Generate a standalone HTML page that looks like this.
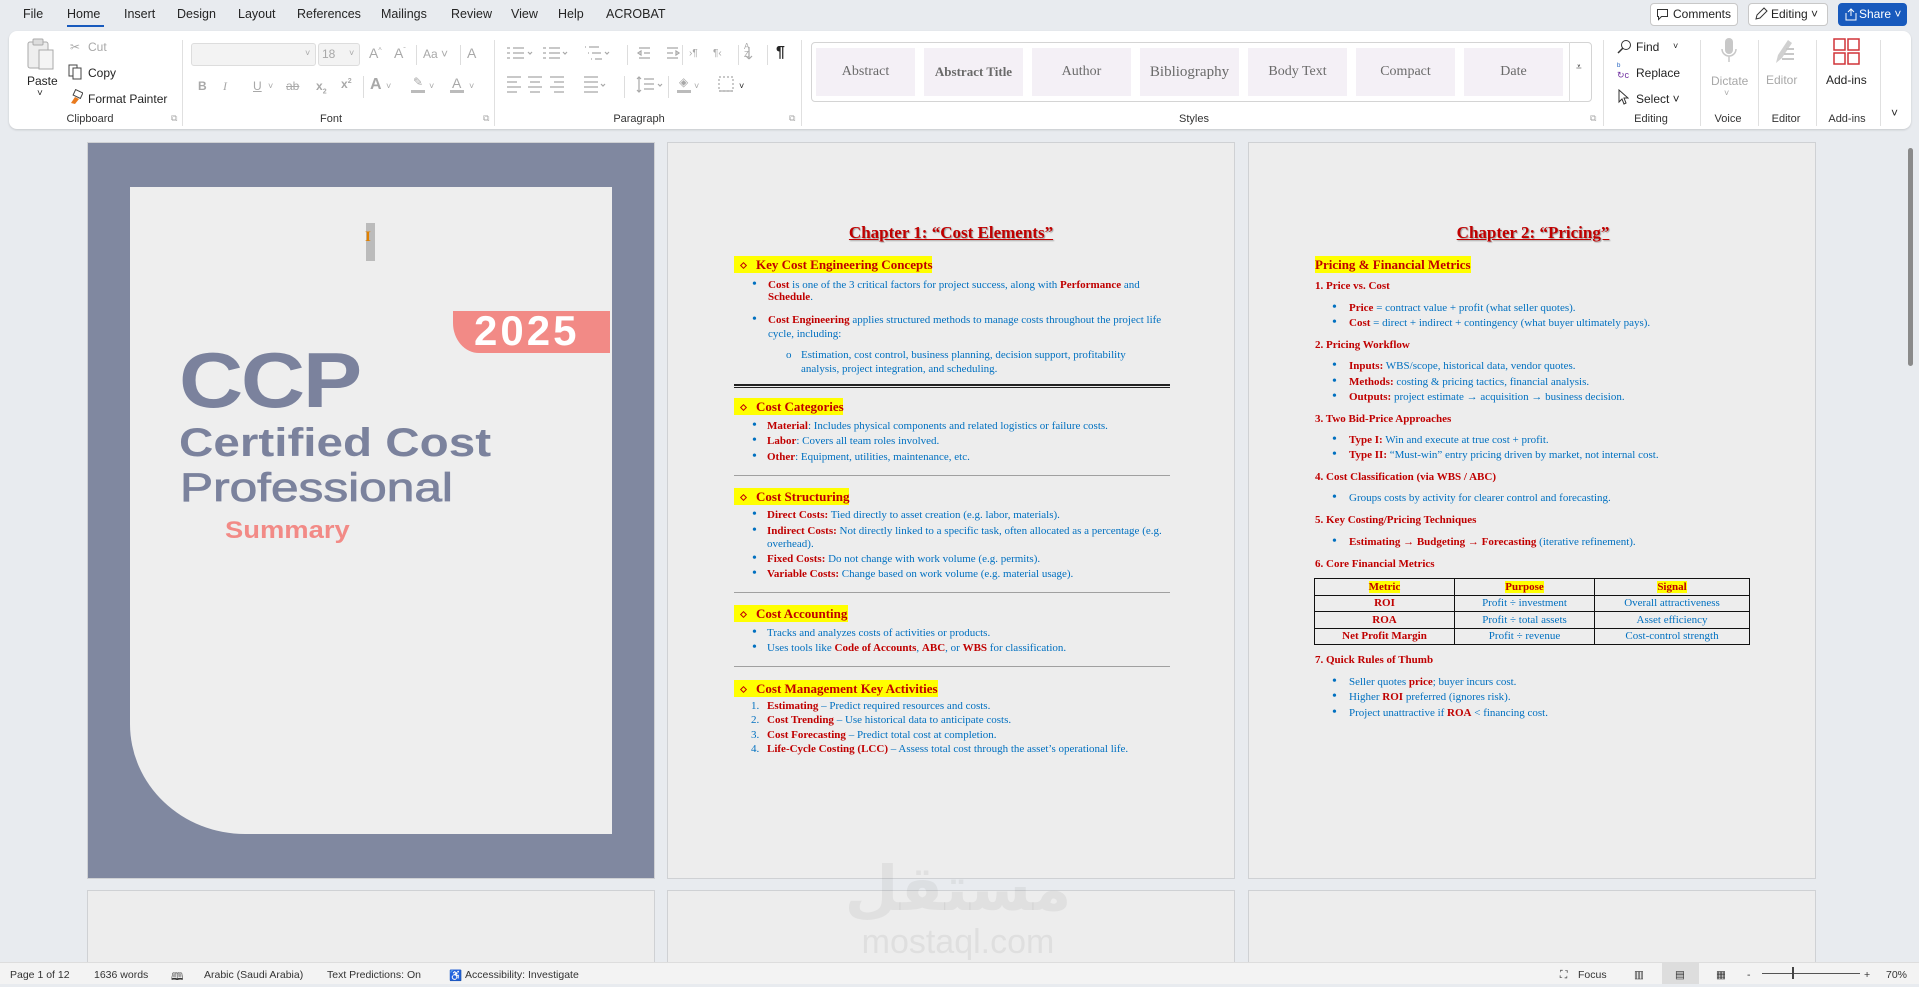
<!DOCTYPE html>
<html><head><meta charset="utf-8">
<style>
*{margin:0;padding:0;box-sizing:border-box}
body{width:1919px;height:984px;overflow:hidden;background:#e8ebef;position:relative;font-family:"Liberation Sans",sans-serif;color:#222}
.a{position:absolute;white-space:nowrap}
.tab{position:absolute;top:7px;font-size:12.5px;color:#242424}
.rib{position:absolute;left:9px;top:31px;width:1902px;height:98px;background:#fff;border-radius:8px;box-shadow:0 1px 2px rgba(0,0,0,.15)}
.sep{position:absolute;top:40px;width:1px;height:86px;background:#e0e0e0}
.gl{position:absolute;top:113px;font-size:11px;color:#333;transform:translateX(-50%)}
.ri{position:absolute;font-size:12px;color:#242424}
.dis{color:#a8a8a8}
.sty{position:absolute;top:48px;width:99px;height:48px;background:#f4f0f6;font-family:"Liberation Serif",serif;font-size:14px;color:#6a6a6a;text-align:center;line-height:48px}
.page{position:absolute;background:#ededed;border:1px solid #cfd1d4}
.l{position:absolute;white-space:nowrap;font:11px/12px "Liberation Serif",serif;color:#0070c0}
.b{font-size:14px}
.r{color:#c00000;font-weight:bold}
.h{position:absolute;background:#ffff00;height:17px;font:bold 13px/17px "Liberation Serif",serif;color:#c00000;white-space:nowrap}
.dm{display:inline-block;width:5px;height:5px;border:1.3px solid #c00000;transform:rotate(45deg);margin:0 10px 1px 7px;vertical-align:middle}
.hr{position:absolute;left:734px;width:436px;height:1px;background:#a0a0a0}
.ch{position:absolute;font:bold 17px "Liberation Serif",serif;color:#c00000;text-decoration:underline;text-shadow:1px 1px 1px rgba(0,0,0,.35);transform:translateX(-50%);white-space:nowrap}
table{position:absolute;left:1314px;top:578px;width:436px;border-collapse:collapse;font:11px "Liberation Serif",serif;color:#0070c0}
td{border:1.5px solid #111;text-align:center;height:16.5px;padding:0}
.st{position:absolute;top:969px;font-size:10.5px;color:#333}
</style></head><body>

<!-- tabs -->
<div class="tab" style="left:23px">File</div>
<div class="tab" style="left:67px">Home</div>
<div class="a" style="left:67px;top:25px;width:37px;height:2px;background:#185abd"></div>
<div class="tab" style="left:124px">Insert</div>
<div class="tab" style="left:177px">Design</div>
<div class="tab" style="left:238px">Layout</div>
<div class="tab" style="left:297px">References</div>
<div class="tab" style="left:381px">Mailings</div>
<div class="tab" style="left:451px">Review</div>
<div class="tab" style="left:511px">View</div>
<div class="tab" style="left:558px">Help</div>
<div class="tab" style="left:606px">ACROBAT</div>

<div class="a" style="left:1650px;top:3px;width:88px;height:23px;border:1px solid #c8c8c8;border-radius:4px;background:#fff;font-size:12px;line-height:21px;padding-left:22px">Comments</div>
<svg class="a" style="left:1656px;top:8px" width="13" height="13"><path d="M1.5 1.5h10v7h-6l-3 3v-3h-1z" fill="none" stroke="#333"/></svg>
<div class="a" style="left:1748px;top:3px;width:80px;height:23px;border:1px solid #c8c8c8;border-radius:4px;background:#fff;font-size:12px;line-height:21px;padding-left:22px">Editing ˅</div>
<svg class="a" style="left:1754px;top:7px" width="14" height="14"><path d="M2 12l1-4 7-7 3 3-7 7z" fill="none" stroke="#333"/></svg>
<div class="a" style="left:1838px;top:3px;width:69px;height:23px;border-radius:4px;background:#185abd;color:#fff;font-size:12px;line-height:23px;padding-left:21px">Share ˅</div>
<svg class="a" style="left:1844px;top:7px" width="14" height="14"><path d="M2 6v7h10V6M7 9V2M4 5l3-3 3 3" fill="none" stroke="#fff"/></svg>

<div class="rib"></div>
<!-- clipboard -->
<svg class="a" style="left:25px;top:38px" width="34" height="32"><rect x="3" y="4" width="20" height="26" rx="2" fill="#eee" stroke="#aaa"/><rect x="8" y="1" width="10" height="6" rx="1" fill="#ddd" stroke="#aaa"/><rect x="14" y="12" width="14" height="19" fill="#f4f4f4" stroke="#aaa"/></svg>
<div class="ri" style="left:27px;top:74px">Paste</div>
<div class="ri" style="left:37px;top:88px;font-size:10px">˅</div>
<div class="ri dis" style="left:70px;top:40px">✂</div><div class="ri dis" style="left:88px;top:40px">Cut</div>
<svg class="a" style="left:68px;top:64px" width="15" height="16"><rect x="1" y="1" width="8" height="11" fill="none" stroke="#444"/><rect x="5" y="4" width="8" height="11" fill="#fff" stroke="#444"/></svg>
<div class="ri" style="left:88px;top:66px">Copy</div>
<svg class="a" style="left:68px;top:89px" width="15" height="16"><path d="M3 14l4-6 4 2-4 5z" fill="#e87a1e"/><rect x="6" y="2" width="8" height="6" fill="none" stroke="#444" transform="rotate(25 10 5)"/></svg>
<div class="ri" style="left:88px;top:92px">Format Painter</div>
<div class="gl" style="left:90px">Clipboard</div>
<div class="ri dis" style="left:171px;top:113px;font-size:9px">⧉</div>
<div class="sep" style="left:182px"></div>
<!-- font -->
<div class="a" style="left:191px;top:43px;width:125px;height:23px;border:1px solid #ddd;border-radius:3px;background:#f3f3f3"></div>
<div class="ri dis" style="left:305px;top:48px;font-size:9px">˅</div>
<div class="a" style="left:318px;top:43px;width:42px;height:23px;border:1px solid #ddd;border-radius:3px;background:#f3f3f3"></div>
<div class="ri dis" style="left:322px;top:47px">18</div><div class="ri dis" style="left:349px;top:48px;font-size:9px">˅</div>
<div class="ri dis" style="left:369px;top:45px;font-size:14px">A<sup style="font-size:7px">^</sup></div>
<div class="ri dis" style="left:394px;top:45px;font-size:14px">A<sup style="font-size:7px">ˇ</sup></div>
<div class="a" style="left:416px;top:45px;width:1px;height:20px;background:#ddd"></div>
<div class="ri dis" style="left:423px;top:47px">Aa ˅</div>
<div class="a" style="left:460px;top:45px;width:1px;height:20px;background:#ddd"></div>
<div class="ri dis" style="left:467px;top:45px;font-size:14px">A</div>
<div class="ri dis" style="left:198px;top:79px;font-weight:bold">B</div>
<div class="ri dis" style="left:223px;top:79px;font-style:italic;font-family:'Liberation Serif'">I</div>
<div class="ri dis" style="left:253px;top:79px;text-decoration:underline">U</div><div class="ri dis" style="left:268px;top:81px;font-size:9px">˅</div>
<div class="ri dis" style="left:286px;top:79px;text-decoration:line-through">ab</div>
<div class="ri dis" style="left:316px;top:79px;font-weight:bold">x<sub style="font-size:7px">2</sub></div>
<div class="ri dis" style="left:341px;top:77px;font-weight:bold">x<sup style="font-size:7px">2</sup></div>
<div class="a" style="left:363px;top:76px;width:1px;height:22px;background:#ddd"></div>
<div class="ri dis" style="left:370px;top:76px;font-size:16px;font-weight:bold">A</div><div class="ri dis" style="left:386px;top:81px;font-size:9px">˅</div>
<div class="a" style="left:411px;top:90px;width:14px;height:3px;background:#bbb"></div><div class="ri dis" style="left:413px;top:75px">✎</div><div class="ri dis" style="left:429px;top:81px;font-size:9px">˅</div>
<div class="ri dis" style="left:452px;top:75px;font-size:14px">A</div><div class="a" style="left:450px;top:90px;width:14px;height:3px;background:#bbb"></div><div class="ri dis" style="left:469px;top:81px;font-size:9px">˅</div>
<div class="gl" style="left:331px">Font</div>
<div class="ri dis" style="left:483px;top:113px;font-size:9px">⧉</div>
<div class="sep" style="left:494px"></div>
<!-- paragraph -->
<svg class="a" style="left:505px;top:44px" width="290" height="52" fill="none" stroke="#a8a8a8" stroke-width="1.2">
<path d="M2 4h3M2 9h3M2 14h3M8 4h11M8 9h11M8 14h11"/><path d="M23 8l2 2 2-2"/>
<path d="M38 4h3M38 9h3M38 14h3M44 4h11M44 9h11M44 14h11"/><path d="M58 8l2 2 2-2"/>
<path d="M84 3h10M87 9h9M90 15h7M80 3h1M83 9h1M86 15h1"/><path d="M100 8l2 2 2-2"/>
<path d="M134 4h11M139 9h6M134 14h11M133 9l3-2v4z"/><path d="M162 4h11M162 9h6M162 14h11M174 9l-3-2v4z"/>
<path d="M244 3v12M244 15l-3-3M244 15l3-3"/>
<path d="M2 37h14M2 42h10M2 47h14M2 52h10" transform="translate(0,-4)"/>
<path d="M23 33h14M25 38h10M23 43h14M25 48h10"/>
<path d="M45 33h14M49 38h10M45 43h14M49 48h10"/>
<path d="M79 33h14M79 38h14M79 43h14M79 48h14"/><path d="M96 40l2 2 2-2"/>
<path d="M134 33v15M132 35l2-2 2 2M132 46l2 2 2-2M139 35h10M139 40h10M139 45h10"/><path d="M153 40l2 2 2-2"/>
<path d="M214 33h14v14h-14z" stroke-dasharray="2 2"/><path d="M214 47h14"/>
</svg>
<div class="a" style="left:627px;top:45px;width:1px;height:20px;background:#ddd"></div>
<div class="a" style="left:682px;top:45px;width:1px;height:20px;background:#ddd"></div>
<div class="ri dis" style="left:689px;top:48px;font-size:10px">›¶</div>
<div class="ri dis" style="left:713px;top:48px;font-size:10px">¶‹</div>
<div class="a" style="left:738px;top:45px;width:1px;height:20px;background:#ddd"></div>
<div class="ri dis" style="left:744px;top:43px;font-size:8px;line-height:8px">A<br>Z</div>
<div class="a" style="left:767px;top:45px;width:1px;height:20px;background:#ddd"></div>
<div class="ri" style="left:776px;top:44px;font-size:16px;font-weight:bold">¶</div>
<div class="a" style="left:624px;top:76px;width:1px;height:22px;background:#ddd"></div>
<div class="a" style="left:668px;top:76px;width:1px;height:22px;background:#ddd"></div>
<div class="a" style="left:677px;top:90px;width:14px;height:3px;background:#bbb"></div><div class="ri dis" style="left:679px;top:75px">◈</div><div class="ri dis" style="left:694px;top:81px;font-size:9px">˅</div>
<div class="ri" style="left:739px;top:81px;font-size:9px">˅</div>
<div class="gl" style="left:639px">Paragraph</div>
<div class="ri dis" style="left:789px;top:113px;font-size:9px">⧉</div>
<div class="sep" style="left:801px"></div>
<!-- styles -->
<div class="a" style="left:811px;top:42px;width:781px;height:60px;border:1px solid #d4d4d4;border-radius:4px"></div>
<div class="sty" style="left:816px">Abstract</div>
<div class="sty" style="left:924px;font-weight:bold;font-size:13px">Abstract Title</div>
<div class="sty" style="left:1032px">Author</div>
<div class="sty" style="left:1140px;font-size:15px">Bibliography</div>
<div class="sty" style="left:1248px">Body Text</div>
<div class="sty" style="left:1356px">Compact</div>
<div class="sty" style="left:1464px">Date</div>
<div class="a" style="left:1569px;top:42px;width:1px;height:60px;background:#ddd"></div>
<div class="ri" style="left:1576px;top:62px;font-size:10px">⩡</div>
<div class="gl" style="left:1194px">Styles</div>
<div class="ri dis" style="left:1590px;top:113px;font-size:9px">⧉</div>
<div class="sep" style="left:1603px"></div>
<!-- editing -->
<svg class="a" style="left:1616px;top:39px" width="16" height="16"><circle cx="10" cy="6" r="4.5" fill="none" stroke="#333"/><path d="M7 9l-5 5" stroke="#333" stroke-width="1.5"/></svg>
<div class="ri" style="left:1636px;top:40px">Find</div><div class="ri" style="left:1673px;top:41px;font-size:9px">˅</div>
<div class="ri" style="left:1617px;top:62px;font-size:9px;color:#185abd;line-height:9px">ᵇ<br><span style="color:#7030a0">↻c</span></div>
<div class="ri" style="left:1636px;top:66px">Replace</div>
<svg class="a" style="left:1617px;top:89px" width="12" height="16"><path d="M2 1v12l3-3 2 5 2-1-2-5h4z" fill="#fff" stroke="#333"/></svg>
<div class="ri" style="left:1636px;top:92px">Select ˅</div>
<div class="gl" style="left:1651px">Editing</div>
<div class="sep" style="left:1700px"></div>
<svg class="a" style="left:1720px;top:37px" width="18" height="28"><rect x="5" y="1" width="8" height="16" rx="4" fill="#c8c8c8"/><path d="M2 12a7 7 0 0 0 14 0M9 19v6" fill="none" stroke="#c8c8c8" stroke-width="1.5"/></svg>
<div class="ri dis" style="left:1711px;top:74px">Dictate</div>
<div class="ri dis" style="left:1724px;top:88px;font-size:9px">˅</div>
<div class="gl" style="left:1728px">Voice</div>
<div class="sep" style="left:1758px"></div>
<svg class="a" style="left:1772px;top:37px" width="24" height="28"><path d="M4 26l2-8L16 3l4 3-10 15z" fill="#d0d0d0"/><path d="M14 12h8M12 17h10M10 22h12" stroke="#c8c8c8" stroke-width="2"/></svg>
<div class="ri dis" style="left:1766px;top:73px">Editor</div>
<div class="gl" style="left:1786px">Editor</div>
<div class="sep" style="left:1816px"></div>
<svg class="a" style="left:1833px;top:38px" width="27" height="27" fill="none" stroke="#d13438" stroke-width="1.5"><rect x="1" y="1" width="11" height="11"/><rect x="15" y="1" width="11" height="11"/><rect x="1" y="15" width="11" height="11"/><rect x="15" y="15" width="11" height="11"/></svg>
<div class="ri" style="left:1826px;top:73px">Add-ins</div>
<div class="gl" style="left:1847px">Add-ins</div>
<div class="sep" style="left:1880px"></div>
<div class="ri" style="left:1891px;top:106px;font-size:12px">˅</div>

<!-- scrollbar -->
<div class="a" style="left:1908px;top:148px;width:5px;height:218px;background:#8a8a8a;border-radius:3px"></div>

<!-- page 1 cover -->
<div class="page" style="left:87px;top:142px;width:568px;height:737px;background:#8088a0"></div>
<div class="a" style="left:130px;top:187px;width:482px;height:647px;background:#eeeeee;border-bottom-left-radius:115px 110px"></div>
<div class="a" style="left:366px;top:223px;width:9px;height:38px;background:#bbb"></div>
<div class="a" style="left:365px;top:229px;font:bold 15px 'Liberation Serif';color:#e08000">I</div>
<div class="a" style="left:453px;top:311px;width:157px;height:42px;background:#f28a86;border-bottom-left-radius:26px 30px"></div>
<div class="a" style="left:474px;top:307px;font:bold 42px/48px 'Liberation Sans';color:#fff;letter-spacing:3px">2025</div>
<div class="a" style="left:179px;top:340px;font:bold 78px/80px 'Liberation Sans';color:#7b829d;letter-spacing:-2px;transform:scaleX(1.14);transform-origin:0 0">CCP</div>
<div class="a" style="left:179px;top:420px;font:bold 40px/46px 'Liberation Sans';color:#7b829d;transform:scaleX(1.19);transform-origin:0 0">Certified Cost</div>
<div class="a" style="left:180px;top:465px;font:40px/46px 'Liberation Sans';color:#7b829d;-webkit-text-stroke:0.8px #7b829d;transform:scaleX(1.24);transform-origin:0 0">Professional</div>
<div class="a" style="left:225px;top:516px;font:bold 24px/30px 'Liberation Sans';color:#f28a86;transform:scaleX(1.14);transform-origin:0 0">Summary</div>

<!-- page 2 -->
<div class="page" style="left:667px;top:142px;width:568px;height:737px"></div>
<div class="ch" style="left:951px;top:223px">Chapter 1: “Cost Elements”</div>
<div class="h" style="left:734px;top:256px;width:198px"><span class="dm"></span>Key Cost Engineering Concepts</div>
<div class="l" style="left:752px;top:279px"><span class="b">•</span></div><div class="l" style="left:768px;top:279px"><span class="r">Cost</span> is one of the 3 critical factors for project success, along with <span class="r">Performance</span> and</div>
<div class="l" style="left:768px;top:291px"><span class="r">Schedule</span>.</div>
<div class="l" style="left:752px;top:314px"><span class="b">•</span></div><div class="l" style="left:768px;top:314px"><span class="r">Cost Engineering</span> applies structured methods to manage costs throughout the project life</div>
<div class="l" style="left:768px;top:328px">cycle, including:</div>
<div class="l" style="left:786px;top:349px">o</div><div class="l" style="left:801px;top:349px">Estimation, cost control, business planning, decision support, profitability</div>
<div class="l" style="left:801px;top:363px">analysis, project integration, and scheduling.</div>
<div class="a" style="left:734px;top:384px;width:436px;height:4px;border-top:2px solid #222;border-bottom:1px solid #222"></div>
<div class="h" style="left:734px;top:398px;width:109px"><span class="dm"></span>Cost Categories</div>
<div class="l" style="left:752px;top:420px"><span class="b">•</span></div><div class="l" style="left:767px;top:420px"><span class="r">Material</span>: Includes physical components and related logistics or failure costs.</div>
<div class="l" style="left:752px;top:435px"><span class="b">•</span></div><div class="l" style="left:767px;top:435px"><span class="r">Labor</span>: Covers all team roles involved.</div>
<div class="l" style="left:752px;top:451px"><span class="b">•</span></div><div class="l" style="left:767px;top:451px"><span class="r">Other</span>: Equipment, utilities, maintenance, etc.</div>
<div class="hr" style="top:475px"></div>
<div class="h" style="left:734px;top:488px;width:115px"><span class="dm"></span>Cost Structuring</div>
<div class="l" style="left:752px;top:509px"><span class="b">•</span></div><div class="l" style="left:767px;top:509px"><span class="r">Direct Costs:</span> Tied directly to asset creation (e.g. labor, materials).</div>
<div class="l" style="left:752px;top:525px"><span class="b">•</span></div><div class="l" style="left:767px;top:525px"><span class="r">Indirect Costs:</span> Not directly linked to a specific task, often allocated as a percentage (e.g.</div>
<div class="l" style="left:767px;top:538px">overhead).</div>
<div class="l" style="left:752px;top:553px"><span class="b">•</span></div><div class="l" style="left:767px;top:553px"><span class="r">Fixed Costs:</span> Do not change with work volume (e.g. permits).</div>
<div class="l" style="left:752px;top:568px"><span class="b">•</span></div><div class="l" style="left:767px;top:568px"><span class="r">Variable Costs:</span> Change based on work volume (e.g. material usage).</div>
<div class="hr" style="top:592px"></div>
<div class="h" style="left:734px;top:605px;width:114px"><span class="dm"></span>Cost Accounting</div>
<div class="l" style="left:752px;top:627px"><span class="b">•</span></div><div class="l" style="left:767px;top:627px">Tracks and analyzes costs of activities or products.</div>
<div class="l" style="left:752px;top:642px"><span class="b">•</span></div><div class="l" style="left:767px;top:642px">Uses tools like <span class="r">Code of Accounts</span>, <span class="r">ABC</span>, or <span class="r">WBS</span> for classification.</div>
<div class="hr" style="top:666px"></div>
<div class="h" style="left:734px;top:680px;width:204px"><span class="dm"></span>Cost Management Key Activities</div>
<div class="l" style="left:751px;top:700px">1.</div><div class="l" style="left:767px;top:700px"><span class="r">Estimating</span> – Predict required resources and costs.</div>
<div class="l" style="left:751px;top:714px">2.</div><div class="l" style="left:767px;top:714px"><span class="r">Cost Trending</span> – Use historical data to anticipate costs.</div>
<div class="l" style="left:751px;top:729px">3.</div><div class="l" style="left:767px;top:729px"><span class="r">Cost Forecasting</span> – Predict total cost at completion.</div>
<div class="l" style="left:751px;top:743px">4.</div><div class="l" style="left:767px;top:743px"><span class="r">Life-Cycle Costing (LCC)</span> – Assess total cost through the asset’s operational life.</div>

<!-- page 3 -->
<div class="page" style="left:1248px;top:142px;width:568px;height:737px"></div>
<div class="ch" style="left:1533px;top:223px">Chapter 2: “Pricing”</div>
<div class="h" style="left:1315px;top:256px;width:156px">Pricing &amp; Financial Metrics</div>
<div class="l r" style="left:1315px;top:280px">1. Price vs. Cost</div>
<div class="l" style="left:1332px;top:302px"><span class="b">•</span></div><div class="l" style="left:1349px;top:302px"><span class="r">Price</span> = contract value + profit (what seller quotes).</div>
<div class="l" style="left:1332px;top:317px"><span class="b">•</span></div><div class="l" style="left:1349px;top:317px"><span class="r">Cost</span> = direct + indirect + contingency (what buyer ultimately pays).</div>
<div class="l r" style="left:1315px;top:339px">2. Pricing Workflow</div>
<div class="l" style="left:1332px;top:360px"><span class="b">•</span></div><div class="l" style="left:1349px;top:360px"><span class="r">Inputs:</span> WBS/scope, historical data, vendor quotes.</div>
<div class="l" style="left:1332px;top:376px"><span class="b">•</span></div><div class="l" style="left:1349px;top:376px"><span class="r">Methods:</span> costing &amp; pricing tactics, financial analysis.</div>
<div class="l" style="left:1332px;top:391px"><span class="b">•</span></div><div class="l" style="left:1349px;top:391px"><span class="r">Outputs:</span> project estimate → acquisition → business decision.</div>
<div class="l r" style="left:1315px;top:413px">3. Two Bid-Price Approaches</div>
<div class="l" style="left:1332px;top:434px"><span class="b">•</span></div><div class="l" style="left:1349px;top:434px"><span class="r">Type I:</span> Win and execute at true cost + profit.</div>
<div class="l" style="left:1332px;top:449px"><span class="b">•</span></div><div class="l" style="left:1349px;top:449px"><span class="r">Type II:</span> “Must-win” entry pricing driven by market, not internal cost.</div>
<div class="l r" style="left:1315px;top:471px">4. Cost Classification (via WBS / ABC)</div>
<div class="l" style="left:1332px;top:492px"><span class="b">•</span></div><div class="l" style="left:1349px;top:492px">Groups costs by activity for clearer control and forecasting.</div>
<div class="l r" style="left:1315px;top:514px">5. Key Costing/Pricing Techniques</div>
<div class="l" style="left:1332px;top:536px"><span class="b">•</span></div><div class="l" style="left:1349px;top:536px"><span class="r">Estimating → Budgeting → Forecasting</span> (iterative refinement).</div>
<div class="l r" style="left:1315px;top:558px">6. Core Financial Metrics</div>
<table>
<tr><td style="width:140px"><span class="r" style="background:#ff0">Metric</span></td><td style="width:140px"><span class="r" style="background:#ff0">Purpose</span></td><td><span class="r" style="background:#ff0">Signal</span></td></tr>
<tr><td class="r">ROI</td><td>Profit ÷ investment</td><td>Overall attractiveness</td></tr>
<tr><td class="r">ROA</td><td>Profit ÷ total assets</td><td>Asset efficiency</td></tr>
<tr><td class="r">Net Profit Margin</td><td>Profit ÷ revenue</td><td>Cost-control strength</td></tr>
</table>
<div class="l r" style="left:1315px;top:654px">7. Quick Rules of Thumb</div>
<div class="l" style="left:1332px;top:676px"><span class="b">•</span></div><div class="l" style="left:1349px;top:676px">Seller quotes <span class="r">price</span>; buyer incurs cost.</div>
<div class="l" style="left:1332px;top:691px"><span class="b">•</span></div><div class="l" style="left:1349px;top:691px">Higher <span class="r">ROI</span> preferred (ignores risk).</div>
<div class="l" style="left:1332px;top:707px"><span class="b">•</span></div><div class="l" style="left:1349px;top:707px">Project unattractive if <span class="r">ROA</span> &lt; financing cost.</div>

<!-- next row pages -->
<div class="page" style="left:87px;top:890px;width:568px;height:80px"></div>
<div class="page" style="left:667px;top:890px;width:568px;height:80px"></div>
<div class="page" style="left:1248px;top:890px;width:568px;height:80px"></div>
<div class="a" style="left:958px;top:848px;transform:translateX(-50%);font:bold 62px/70px 'Noto Sans CJK SC','DejaVu Sans',sans-serif;color:rgba(120,120,120,.1)">مستقل</div>
<div class="a" style="left:958px;top:922px;transform:translateX(-50%);font:34px/40px 'Liberation Sans',sans-serif;color:rgba(120,120,120,.12)">mostaql.com</div>

<!-- status bar -->
<div class="a" style="left:0;top:962px;width:1919px;height:22px;background:#f3f3f3;border-top:1px solid #ddd"></div>
<div class="st" style="left:10px">Page 1 of 12</div>
<div class="st" style="left:94px">1636 words</div>
<div class="st" style="left:171px">🕮</div>
<div class="st" style="left:204px">Arabic (Saudi Arabia)</div>
<div class="st" style="left:327px">Text Predictions: On</div>
<div class="st" style="left:449px">♿</div>
<div class="st" style="left:465px">Accessibility: Investigate</div>
<div class="st" style="left:1560px">⛶</div>
<div class="st" style="left:1578px">Focus</div>
<div class="st" style="left:1634px">▥</div>
<div class="a" style="left:1662px;top:963px;width:37px;height:21px;background:#ddd"></div>
<div class="st" style="left:1675px">▤</div>
<div class="st" style="left:1716px">▦</div>
<div class="st" style="left:1747px">-</div>
<div class="a" style="left:1762px;top:973px;width:98px;height:1px;background:#555"></div>
<div class="a" style="left:1792px;top:967px;width:2px;height:12px;background:#444"></div>
<div class="st" style="left:1864px">+</div>
<div class="st" style="left:1886px">70%</div>
</body></html>
